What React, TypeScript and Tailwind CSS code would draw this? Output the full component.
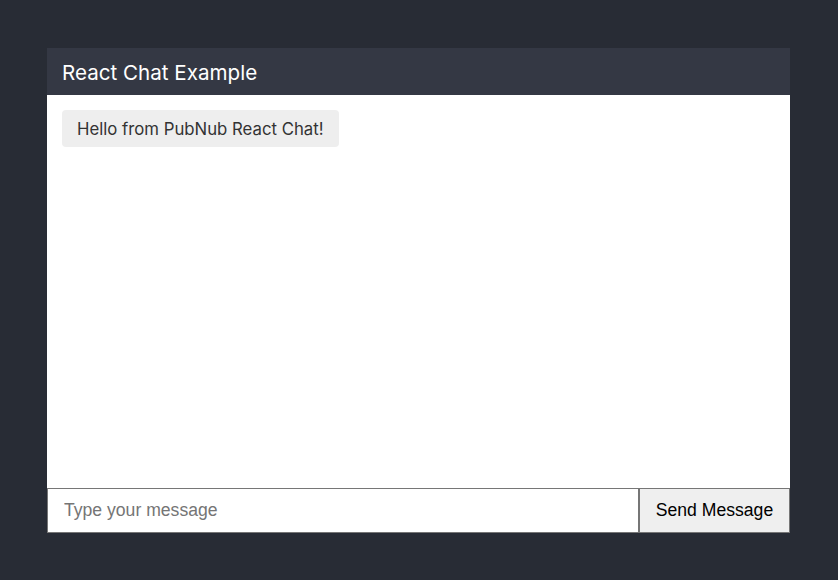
import { useState } from 'react';

export default function App() {
  const [text, setText] = useState('');
  const messages = ['Hello from PubNub React Chat!'];

  return (
    <div className="min-h-screen bg-[#282c35] pt-[48px] px-[47px]" style={{ fontFamily: 'Inter, "Noto Sans", sans-serif' }}>
      <div className="w-[743px] flex flex-col">
        {/* Header */}
        <div className="h-[47px] bg-[#343844] flex items-center px-[15px] pt-[3px]">
          <span className="text-white text-[20.6px] leading-none">React Chat Example</span>
        </div>

        {/* Message list */}
        <div className="h-[393px] bg-white px-[15px] py-[15px] flex flex-col items-start gap-2">
          {messages.map((m, i) => (
            <div key={i} className="bg-[#eeeeee] rounded-[4px] h-[37px] px-[15px] pt-[2px] flex items-center text-[16.75px] text-[#333333]">
              {m}
            </div>
          ))}
        </div>

        {/* Input row */}
        <div className="flex h-[45px]">
          <input
            value={text}
            onChange={(e) => setText(e.target.value)}
            placeholder="Type your message"
            className="flex-1 min-w-0 bg-white border border-[#767676] px-[16px] text-[17.6px] text-black placeholder:text-[#757575] outline-none"
            style={{ fontFamily: '"Liberation Sans", Arial, sans-serif' }}
          />
          <button
            className="w-[151px] bg-[#efefef] border border-[#767676] text-[17.6px] text-black"
            style={{ fontFamily: '"Liberation Sans", Arial, sans-serif' }}
          >
            Send Message
          </button>
        </div>
      </div>
    </div>
  );
}
